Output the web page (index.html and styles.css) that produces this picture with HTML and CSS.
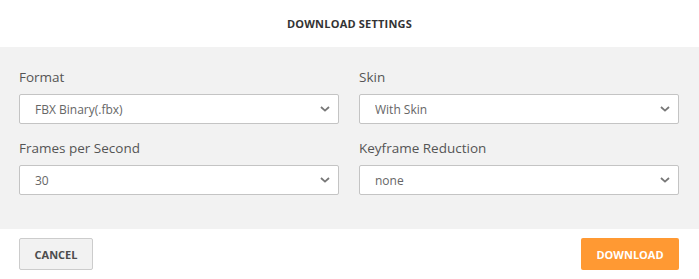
FILE: index.html
```html
<!DOCTYPE html>
<html lang="en">
<head>
    <meta charset="UTF-8">
    <meta name="viewport" content="width=device-width, initial-scale=1.0">
    <title>Download Settings</title>
    <link rel="stylesheet" href="styles.css">
</head>
<body>
    <div class="dialog">
        <div class="dialog-header">
            <h2>DOWNLOAD SETTINGS</h2>
        </div>
        <div class="dialog-body">
            <div class="form-group">
                <label for="format">Format</label>
                <div class="select-wrap">
                    <select id="format" name="format">
                        <option value="fbx">FBX Binary(.fbx)</option>
                    </select>
                    <svg class="chevron" width="10" height="6" viewBox="0 0 10 6"><path d="M1 1l4 3.6L9 1" fill="none" stroke="#777" stroke-width="1.8"/></svg>
                </div>
            </div>
            <div class="form-group">
                <label for="skin">Skin</label>
                <div class="select-wrap">
                    <select id="skin" name="skin">
                        <option value="with">With Skin</option>
                    </select>
                    <svg class="chevron" width="10" height="6" viewBox="0 0 10 6"><path d="M1 1l4 3.6L9 1" fill="none" stroke="#777" stroke-width="1.8"/></svg>
                </div>
            </div>
            <div class="form-group">
                <label for="fps">Frames per Second</label>
                <div class="select-wrap">
                    <select id="fps" name="fps">
                        <option value="30">30</option>
                    </select>
                    <svg class="chevron" width="10" height="6" viewBox="0 0 10 6"><path d="M1 1l4 3.6L9 1" fill="none" stroke="#777" stroke-width="1.8"/></svg>
                </div>
            </div>
            <div class="form-group">
                <label for="reduction">Keyframe Reduction</label>
                <div class="select-wrap">
                    <select id="reduction" name="reduction">
                        <option value="none">none</option>
                    </select>
                    <svg class="chevron" width="10" height="6" viewBox="0 0 10 6"><path d="M1 1l4 3.6L9 1" fill="none" stroke="#777" stroke-width="1.8"/></svg>
                </div>
            </div>
        </div>
        <div class="dialog-footer">
            <button type="button" class="btn btn-cancel">CANCEL</button>
            <button type="button" class="btn btn-download">DOWNLOAD</button>
        </div>
    </div>
</body>
</html>
```

FILE: styles.css
```css
body {
    font-family: "Open Sans", Arial, sans-serif;
    background-color: #ffffff;
    margin: 0;
}
.dialog {
    width: 699px;
    height: 279px;
    display: flex;
    flex-direction: column;
}
.dialog-header {
    height: 47px;
    display: flex;
    align-items: center;
    justify-content: center;
}
h2 {
    margin: 0;
    font-size: 11px;
    font-weight: bold;
    color: #333;
    letter-spacing: 0.2px;
}
.dialog-body {
    background-color: #f2f2f2;
    height: 182px;
    box-sizing: border-box;
    padding: 20px 20px 0 19px;
    display: grid;
    grid-template-columns: 320px 320px;
    column-gap: 20px;
    row-gap: 14px;
    align-content: start;
}
.form-group {
    display: flex;
    flex-direction: column;
}
label {
    font-size: 13.5px;
    color: #555;
    line-height: 20px;
    margin-bottom: 7px;
}
.select-wrap {
    position: relative;
}
select {
    appearance: none;
    -webkit-appearance: none;
    width: 100%;
    height: 30px;
    padding: 0 30px 0 15px;
    border: 1px solid #c4c4c4;
    border-radius: 2px;
    background-color: #ffffff;
    font-family: inherit;
    font-size: 12px;
    color: #666;
    box-sizing: border-box;
    outline: none;
}
.chevron {
    position: absolute;
    right: 9px;
    top: 12px;
    pointer-events: none;
}
.dialog-footer {
    flex: 1;
    display: flex;
    align-items: center;
    justify-content: space-between;
    padding: 0 20px 0 19px;
}
.btn {
    height: 32px;
    border-radius: 2px;
    font-family: inherit;
    font-size: 11px;
    font-weight: bold;
    cursor: pointer;
    box-sizing: border-box;
}
.btn-cancel {
    width: 74px;
    background-color: #f2f2f2;
    border: 1px solid #ccc;
    color: #4d4d4d;
}
.btn-download {
    width: 98px;
    background-color: #ff9933;
    border: none;
    color: #ffffff;
}
```
